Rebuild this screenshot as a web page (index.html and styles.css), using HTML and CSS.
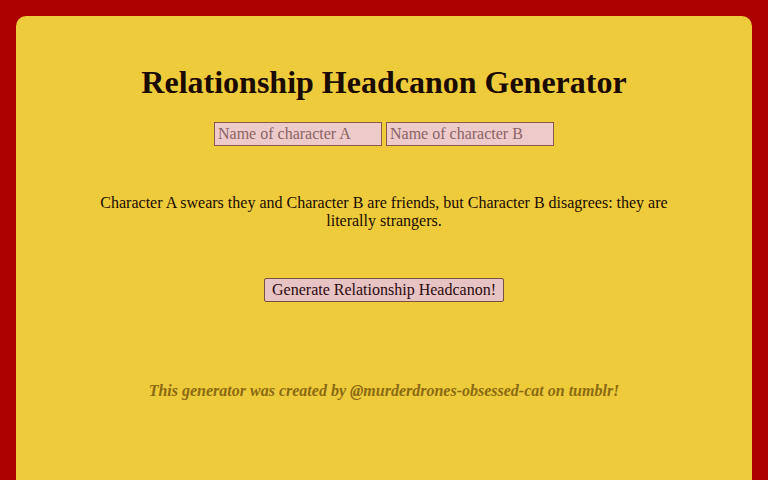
FILE: index.html
```html
<!DOCTYPE html>
<html>
<head>
<meta charset="utf-8">
<link rel="stylesheet" href="styles.css">
</head>
<body>
<main class="card">
  <h1 class="title">Relationship Headcanon Generator</h1>
  <div class="inputs">
    <input class="name" type="text" placeholder="Name of character A">
    <input class="name" type="text" placeholder="Name of character B">
  </div>
  <p class="result">Character A swears they and Character B are friends, but Character B disagrees: they are literally strangers.</p>
  <button class="generate" type="button">Generate Relationship Headcanon!</button>
  <p class="credit">This generator was created by @murderdrones-obsessed-cat on tumblr!</p>
</main>
</body>
</html>
```
FILE: styles.css
```css
html, body {
  margin: 0;
  padding: 0;
  height: 100%;
}
body {
  background: #aa0000;
  padding: 16px 16px 0;
  box-sizing: border-box;
  font-family: "Liberation Serif", "Times New Roman", serif;
  color: #1a0a00;
  overflow: hidden;
}
.card {
  background: #eecb3b;
  border-radius: 10px 10px 0 0;
  min-height: 480px;
  display: flex;
  flex-direction: column;
  align-items: center;
  padding-top: 48px;
  box-sizing: border-box;
}
.title {
  font-size: 32px;
  font-weight: bold;
  line-height: 37px;
  margin: 0;
}
.inputs {
  display: flex;
  gap: 4px;
  margin-top: 21px;
}
.name {
  width: 168px;
  height: 24px;
  box-sizing: border-box;
  background: #efcaca;
  border: 1px solid #8a5a48;
  font-family: "Liberation Serif", "Times New Roman", serif;
  font-size: 16px;
  padding: 0 3px;
  margin: 0;
  color: #1a0a00;
}
.name::placeholder {
  color: #8a6464;
}
.result {
  font-size: 16px;
  line-height: 18px;
  text-align: center;
  max-width: 580px;
  margin: 48px 0 0;
}
.generate {
  margin-top: 48px;
  width: 240px;
  height: 24px;
  box-sizing: border-box;
  background: #e8c3c3;
  border: 1px solid #7a5040;
  border-radius: 2px;
  font-family: "Liberation Serif", "Times New Roman", serif;
  font-size: 16px;
  color: #2a0a10;
  padding: 0;
}
.credit {
  margin: 80px 0 0;
  font-size: 16px;
  font-weight: bold;
  font-style: italic;
  color: #8a6a12;
}
```
